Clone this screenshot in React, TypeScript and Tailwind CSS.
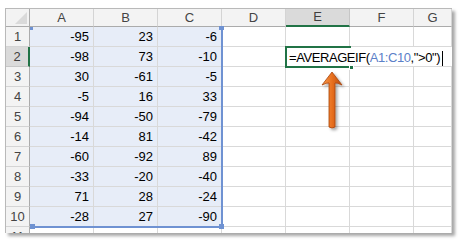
import React from "react";

const cols = ["A", "B", "C", "D", "E", "F", "G"];

const data: number[][] = [
  [-95, 23, -6],
  [-98, 73, -10],
  [30, -61, -5],
  [-5, 16, 33],
  [-94, -50, -79],
  [-14, 81, -42],
  [-60, -92, 89],
  [-33, -20, -40],
  [71, 28, -24],
  [-28, 27, -90],
];

function Arrow() {
  return (
    <svg
      className="absolute left-[308px] top-[57px]"
      width="38"
      height="72"
      viewBox="0 0 38 72"
    >
      <defs>
        <linearGradient id="arr" x1="0" y1="0" x2="1" y2="0">
          <stop offset="0" stopColor="#f59a4e" />
          <stop offset="0.5" stopColor="#e8701f" />
          <stop offset="1" stopColor="#b94c0c" />
        </linearGradient>
        <filter id="sh" x="-50%" y="-20%" width="200%" height="150%">
          <feDropShadow dx="2" dy="2" stdDeviation="1.4" floodColor="#000" floodOpacity="0.35" />
        </filter>
      </defs>
      <path
        d="M18 6 L28 19 Q23 16.5 21 17 L21 61 Q18 63 15 61 L15 17 Q13 16.5 8 19 Z"
        fill="url(#arr)"
        stroke="#a8440c"
        strokeWidth="0.8"
        filter="url(#sh)"
      />
    </svg>
  );
}

export default function App() {
  const rows = [...data.map((r, i) => ({ n: i + 1, vals: r })), { n: 11, vals: [] as number[] }];

  return (
    <div className="w-[464px] h-[243px] bg-white pt-2 pl-[5px] font-['Liberation_Sans',Arial,sans-serif]">
      <div className="relative w-[447px] h-[225px] overflow-hidden border-t border-l border-[#b9b9b9] bg-white shadow-[3px_3px_3px_rgba(0,0,0,0.35)]">
        <div className="grid grid-cols-[24px_64px_64px_64px_64px_64px_64px_1fr] grid-rows-[18px] auto-rows-[20px]">
          {/* header row */}
          <div className="relative bg-[#f3f3f3] border-r border-b border-[#ababab]">
            <div className="absolute right-[2px] bottom-[2px] w-0 h-0 border-l-[12px] border-l-transparent border-b-[12px] border-b-[#dadada]" />
          </div>
          {cols.map((c) => (
            <div
              key={c}
              className={
                c === "E"
                  ? "flex items-center justify-center bg-[#dadada] border-r border-[#c6c6c6] border-b-2 border-b-[#217346] text-[13px] text-[#3f3f3f]"
                  : "flex items-center justify-center bg-[#f3f3f3] border-r border-[#d4d4d4] border-b border-b-[#ababab] text-[13px] text-[#444]"
              }
            >
              {c}
            </div>
          ))}

          {rows.map((r) => (
            <React.Fragment key={r.n}>
              <div
                className={
                  r.n === 2
                    ? "flex items-center justify-center bg-[#dadada] border-r-2 border-r-[#217346] border-b border-[#c6c6c6] text-[13px] text-[#3f3f3f]"
                    : "flex items-center justify-center bg-[#f3f3f3] border-r border-r-[#ababab] border-b border-[#d4d4d4] text-[13px] text-[#444]"
                }
              >
                {r.n}
              </div>
              {cols.map((c, ci) => {
                const inSel = ci < 3 && r.n <= 10;
                const v = r.vals[ci];
                const noRight = r.n === 2 && ci >= 4;
                return (
                  <div
                    key={c}
                    className={
                      "relative flex items-center justify-end pr-[4px] border-b border-[#d9d9d9] text-[13px] text-black " +
                      (noRight ? "" : "border-r ") +
                      (inSel ? "bg-[#e7edf8]" : "bg-white")
                    }
                  >
                    {v !== undefined ? v : ""}
                    {r.n === 2 && c === "E" && (
                      <>
                        <div className="absolute -left-px -top-px w-[66px] h-[22px] border-2 border-r-0 border-[#217346] z-10 pointer-events-none">
                          <div className="absolute -right-[3px] -bottom-[4px] w-[5px] h-[5px] bg-[#217346] border border-white" />
                        </div>
                        <span className="absolute left-[3px] top-[1px] z-20 whitespace-nowrap text-[13px] tracking-[-0.42px] text-black">
                          =AVERAGEIF(<span className="text-[#5b80c8]">A1:C10</span>,"&gt;0")
                          <span className="inline-block w-px h-[15px] bg-black align-middle ml-[2px]" />
                        </span>
                      </>
                    )}
                  </div>
                );
              })}
            </React.Fragment>
          ))}
        </div>

        {/* reference range A1:C10 */}
        <div className="absolute left-[24px] top-[18px] w-[193px] h-[201px] border-r-2 border-b-2 border-[#6f92d2] pointer-events-none">
          <div className="absolute left-0 top-0 w-[3px] h-[3px] bg-[#6f92d2]" />
          <div className="absolute -right-[3px] -top-px w-[5px] h-[4px] bg-[#6f92d2]" />
          <div className="absolute left-0 -bottom-[3px] w-[5px] h-[5px] bg-[#6f92d2]" />
          <div className="absolute -right-[3px] -bottom-[3px] w-[5px] h-[5px] bg-[#6f92d2]" />
        </div>

        <Arrow />
      </div>
    </div>
  );
}
